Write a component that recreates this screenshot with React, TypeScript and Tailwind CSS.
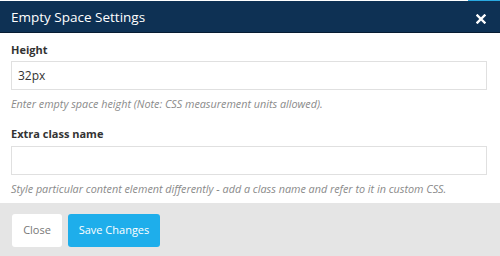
export default function App() {
  return (
    <div className="w-[500px] h-[256px] bg-white flex flex-col overflow-hidden" style={{ fontFamily: '"Open Sans", sans-serif' }}>
      <div className="h-px bg-white flex justify-end">
        <div className="w-[32px] bg-[#29a9e0]" />
      </div>
      <div className="h-[32px] bg-[#0e3154] border-b border-[#071c33] flex items-center justify-between pl-[11px] pr-[14px]">
        <span className="text-white text-[13.5px] leading-none mt-[2px]">Empty Space Settings</span>
        <svg width="10" height="10" viewBox="0 0 10 10" className="mt-[4px]">
          <path d="M1.5 1.5 L8.5 8.5 M8.5 1.5 L1.5 8.5" stroke="white" strokeWidth="2.4" strokeLinecap="square" />
        </svg>
      </div>
      <div className="flex flex-col pl-[11px] pr-[13px] pt-[9px]">
        <label className="text-[11px] font-bold text-[#333] leading-[16px]">Height</label>
        <div className="mt-[3px] h-[29px] border border-[#e0e0e0] flex items-center px-[6px] text-[12px] text-[#333]">32px</div>
        <p className="mt-[6px] text-[10.8px] italic text-[#8a8a8a] leading-[16px]">Enter empty space height (Note: CSS measurement units allowed).</p>
        <label className="mt-[14px] text-[11px] font-bold text-[#333] leading-[16px]">Extra class name</label>
        <div className="mt-[4px] h-[29px] border border-[#e0e0e0]" />
        <p className="mt-[6px] text-[10.8px] italic text-[#8a8a8a] leading-[16px]">Style particular content element differently - add a class name and refer to it in custom CSS.</p>
      </div>
      <div className="mt-auto h-[53px] bg-[#e5e5e5] flex items-start gap-[6px] pl-[12px] pt-[11px]">
        <button className="h-[33px] w-[50px] bg-white rounded-[3px] text-[11px] text-[#777]">Close</button>
        <button className="h-[33px] w-[92px] bg-[#1eaeeb] rounded-[3px] text-[11px] text-white">Save Changes</button>
      </div>
    </div>
  );
}
